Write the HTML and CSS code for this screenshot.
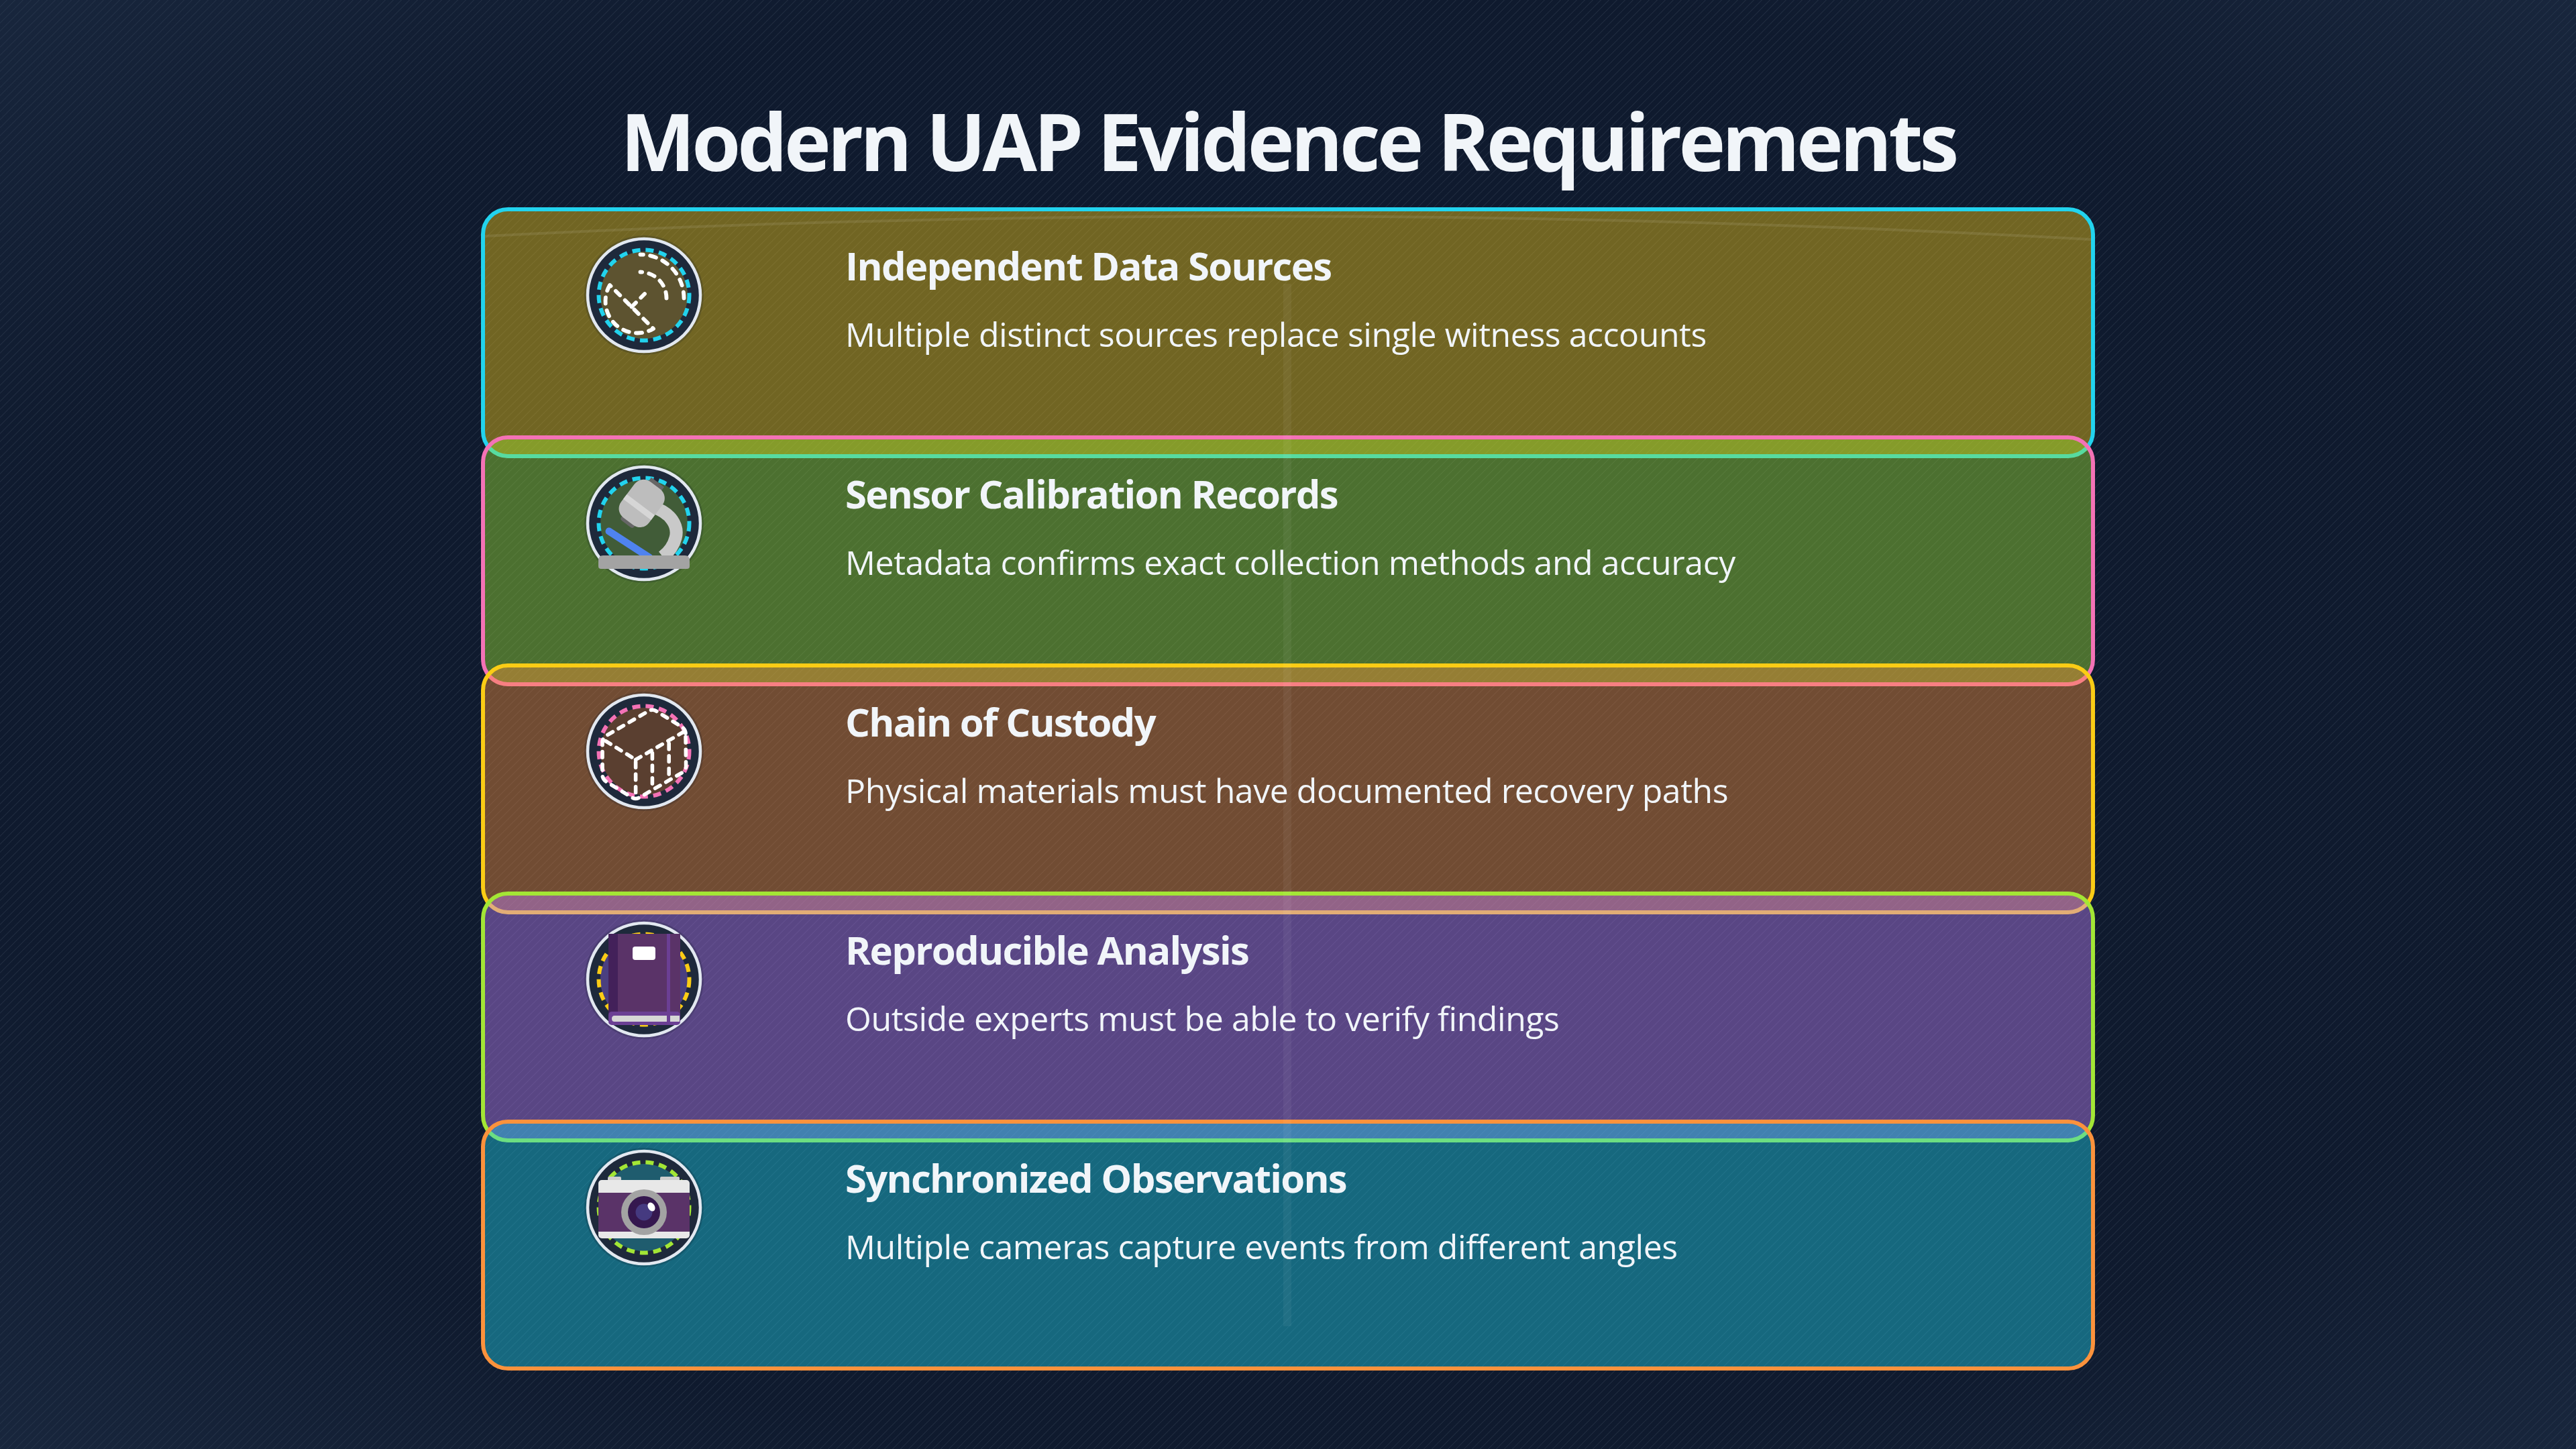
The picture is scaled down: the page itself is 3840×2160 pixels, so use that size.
FILE: index.html
```html
<!DOCTYPE html>
<html lang="en">
<head>
	<meta charset="UTF-8">
	<title>Modern UAP Evidence Requirements</title>
	<link rel="stylesheet" href="styles.css">
</head>
<body>
	<div class="page">
		<h1 class="title">Modern UAP Evidence Requirements</h1>
		<div class="stack">
			<div class="card card-yellow">
				<svg class="arc" viewBox="0 0 2394 60" preserveAspectRatio="none"><path d="M0 37 Q1197 -25 2394 42"/></svg>
				<svg class="icon" viewBox="0 0 200 200">
					<circle class="halo" cx="100" cy="100" r="89"/>
					<circle class="ring" cx="100" cy="100" r="84"/>
					<circle class="inner" cx="100" cy="100" r="65"/>
					<circle class="dash dash-cyan" cx="100" cy="100" r="67.5"/>
					<g class="line" transform="translate(23 20) scale(6.5)">
						<path d="M4 10a7.31 7.31 0 0 0 10 10Z"/>
						<path d="m9 15 3-3"/>
						<path d="M17 13a6 6 0 0 0-6-6"/>
						<path d="M21 13A10 10 0 0 0 11 3"/>
					</g>
				</svg>
				<div class="text">
					<h2>Independent Data Sources</h2>
					<p>Multiple distinct sources replace single witness accounts</p>
				</div>
			</div>
			<div class="card card-lime">
				<svg class="icon" viewBox="0 0 200 200">
					<circle class="halo" cx="100" cy="100" r="89"/>
					<circle class="ring" cx="100" cy="100" r="84"/>
					<circle class="inner" cx="100" cy="100" r="65"/>
					<circle class="dash dash-cyan" cx="100" cy="100" r="67.5"/>
					<path d="M48 112 L108 151" fill="none" stroke="#4f83ef" stroke-width="11" stroke-linecap="round"/>
					<path d="M113 76 C140 84 152 104 147 122 C144 134 138 142 128 150" fill="none" stroke="#c9c9c9" stroke-width="19"/>
					<g transform="translate(97 70) rotate(37)">
						<rect x="-12" y="-39" width="24" height="12" fill="#666"/>
						<rect x="-12" y="29" width="24" height="10" rx="4" fill="#666"/>
						<rect x="-26" y="-33" width="52" height="67" rx="17" fill="#bdbdbd"/>
						<rect x="-26" y="3" width="52" height="9" fill="#d6d6d6"/>
					</g>
					<path d="M39 148 H161 Q168 148 168 156 V164 Q168 168 164 168 H36 Q32 168 32 164 V156 Q32 148 39 148Z" fill="#a3a3a3"/>
				</svg>
				<div class="text">
					<h2>Sensor Calibration Records</h2>
					<p>Metadata confirms exact collection methods and accuracy</p>
				</div>
			</div>
			<div class="card card-orange">
				<svg class="icon" viewBox="0 0 200 200">
					<circle class="halo" cx="100" cy="100" r="89"/>
					<circle class="ring" cx="100" cy="100" r="84"/>
					<circle class="inner" cx="100" cy="100" r="65"/>
					<circle class="dash dash-pink" cx="100" cy="100" r="67.5"/>
					<g class="line" transform="translate(25.6 25.6) scale(6.2)">
						<path d="M22 7.7c0-.6-.4-1.2-.8-1.5l-6.3-3.9a1.7 1.7 0 0 0-1.8 0L2.8 8.3c-.5.3-.8.9-.8 1.5v7.9c0 .6.4 1.2.8 1.5l6.3 3.9a1.7 1.7 0 0 0 1.8 0l10.3-6c.5-.3.9-1 .9-1.5Z"/>
						<path d="M10 21.9V14L2.1 9.1"/>
						<path d="m10 14 11.9-6.9"/>
						<path d="M14 19.8v-8.1"/>
						<path d="M18 17.5V9.4"/>
					</g>
				</svg>
				<div class="text">
					<h2>Chain of Custody</h2>
					<p>Physical materials must have documented recovery paths</p>
				</div>
			</div>
			<div class="card card-purple">
				<svg class="icon" viewBox="0 0 200 200">
					<circle class="halo" cx="100" cy="100" r="89"/>
					<circle class="ring" cx="100" cy="100" r="84"/>
					<circle class="inner" cx="100" cy="100" r="65"/>
					<circle class="dash dash-yellow" cx="100" cy="100" r="67.5"/>
					<rect x="47" y="32" width="107" height="120" fill="#5a3368"/>
					<rect x="47" y="32" width="14" height="120" fill="#43215a"/>
					<rect x="134" y="32" width="5" height="120" fill="#6b3f94"/>
					<rect x="83" y="51" width="34" height="20" rx="4" fill="#fff"/>
					<rect x="47" y="148" width="107" height="20" rx="5" fill="#6b3f94"/>
					<path d="M56 154 H134 V163 H56 Q52 163 52 158.5 Q52 154 56 154Z" fill="#d6d6d6"/>
					<rect x="139" y="154" width="14" height="9" fill="#d6d6d6"/>
				</svg>
				<div class="text">
					<h2>Reproducible Analysis</h2>
					<p>Outside experts must be able to verify findings</p>
				</div>
			</div>
			<div class="card card-cyan">
				<svg class="icon" viewBox="0 0 200 200">
					<circle class="halo" cx="100" cy="100" r="89"/>
					<circle class="ring" cx="100" cy="100" r="84"/>
					<circle class="inner" cx="100" cy="100" r="65"/>
					<circle class="dash dash-lime" cx="100" cy="100" r="67.5"/>
					<rect x="46" y="54" width="20" height="10" rx="2" fill="#cfcfcf"/>
					<rect x="124" y="54" width="29" height="10" rx="2" fill="#cfcfcf"/>
					<rect x="32" y="59" width="136" height="87" rx="5" fill="#e8e8e8"/>
					<rect x="32" y="78" width="136" height="58" fill="#5a3368"/>
					<circle cx="100" cy="107" r="34" fill="#a3a3a3"/>
					<circle cx="100" cy="107" r="24" fill="#35184f"/>
					<circle cx="100" cy="107" r="12.5" fill="#453a80"/>
					<ellipse cx="111" cy="99" rx="5" ry="7" transform="rotate(-30 111 99)" fill="#fff"/>
				</svg>
				<div class="text">
					<h2>Synchronized Observations</h2>
					<p>Multiple cameras capture events from different angles</p>
				</div>
			</div>
			<div class="seam"></div>
		</div>
	</div>
</body>
</html>
```

FILE: styles.css
```css
html, body {
	margin: 0;
	padding: 0;
}
body {
	width: 3840px;
	height: 2160px;
	overflow: hidden;
	background-color: #0f1a2e;
	font-family: "Open Sans", "Liberation Sans", sans-serif;
}
.page {
	width: 100%;
	height: 100%;
	display: flex;
	flex-direction: column;
	align-items: center;
	box-sizing: border-box;
	padding-top: 130px;
	background-image:
		radial-gradient(ellipse at center, rgba(15, 26, 46, 0) 72%, rgba(44, 64, 92, .32) 100%),
		repeating-linear-gradient(135deg, rgba(255, 255, 255, 0) 0, rgba(255, 255, 255, 0) 6.5px, rgba(148, 163, 184, .09) 6.5px, rgba(148, 163, 184, .09) 8.485px);
	background-size: auto, 24px 24px;
}

/* 标题 */
.title {
	margin: 0;
	font-size: 118px;
	line-height: 160px;
	font-weight: 700;
	color: #f1f5f9;
	text-align: center;
	letter-spacing: -5px;
}

/* 卡片叠放，上下压住一条边 */
.stack {
	position: relative;
	width: 2406px;
	margin-top: 19px;
}
.card {
	position: relative;
	display: flex;
	box-sizing: border-box;
	height: 374px;
	margin-bottom: -34px;
	padding: 25px 0 0 137px;
	border: 6px solid;
	border-radius: 40px;
}
.card-yellow {
	background: rgba(250, 204, 21, .42);
	border-color: #22d3ee;
}
.card-lime {
	background: rgba(163, 230, 53, .42);
	border-color: #f472b6;
}
.card-orange {
	background: rgba(251, 146, 60, .42);
	border-color: #facc15;
}
.card-purple {
	background: rgba(192, 132, 252, .42);
	border-color: #a3e635;
}
.card-cyan {
	background: rgba(34, 211, 238, .42);
	border-color: #fb923c;
}

.arc {
	position: absolute;
	left: 0;
	top: 0;
	width: 100%;
	height: 60px;
}
.arc path {
	fill: none;
	stroke: rgba(255, 255, 255, .09);
	stroke-width: 4;
}
.seam {
	position: absolute;
	left: 1196px;
	top: 114px;
	width: 12px;
	height: 1554px;
	background: rgba(255, 255, 255, .05);
}

/* 图标 */
.icon {
	flex: none;
	width: 200px;
	height: 200px;
}
.halo {
	fill: rgba(15, 23, 42, .2);
}
.ring {
	fill: #1e293b;
	stroke: #e2e8f0;
	stroke-width: 4.5;
}
.card-yellow .inner { fill: #5d5330; }
.card-lime .inner { fill: #415c38; }
.card-orange .inner { fill: #5a3f30; }
.card-purple .inner { fill: #4a3f80; }
.card-cyan .inner { fill: #1f5c6e; }
.dash {
	fill: none;
	stroke-width: 6;
	stroke-dasharray: 12 8;
}
.dash-cyan { stroke: #22d3ee; }
.dash-pink { stroke: #f472b6; }
.dash-yellow { stroke: #facc15; }
.dash-lime { stroke: #a3e635; }
.line path {
	fill: none;
	stroke: #fff;
	stroke-width: .9;
	stroke-linecap: round;
	stroke-linejoin: round;
	stroke-dasharray: 1.4 1.6;
}

/* 文字 */
.text {
	margin-left: 200px;
	color: #f1f5f9;
}
.text h2 {
	margin: 0;
	padding-top: 22px;
	font-size: 58px;
	line-height: 68px;
	font-weight: 700;
	letter-spacing: -1.7px;
}
.text p {
	margin: 32px 0 0;
	font-size: 50px;
	line-height: 72px;
	font-weight: 400;
	letter-spacing: -.45px;
	color: #f1f5f9;
}
```
